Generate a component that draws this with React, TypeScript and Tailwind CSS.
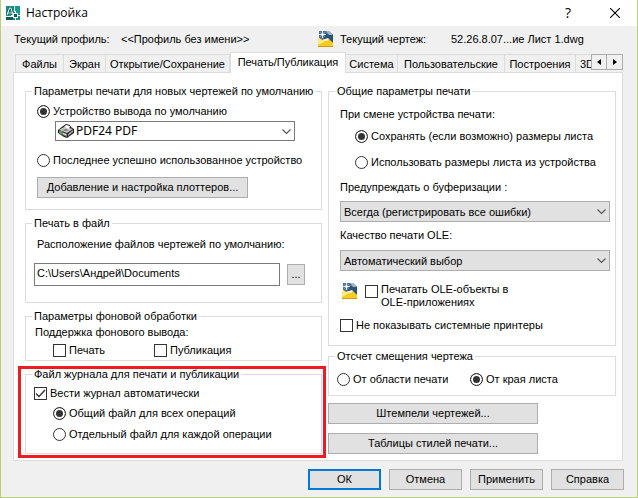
import { useState, type ReactNode } from "react";

const cx = (...parts: (string | undefined)[]) => parts.filter(Boolean).join(" ");

function AppIcon() {
  return (
    <svg width="14" height="14" viewBox="0 0 14 14" aria-hidden="true" className="shrink-0">
      <rect width="14" height="14" fill="#1a8f86" />
      <path d="M8 0h1v6H8z" fill="#d9f3ef" />
      <path d="M9 0h5v8H9z" fill="#17998c" />
      <path d="M0 10h7v4H0z" fill="#0b5f5a" />
      <path d="M1 9 3.500 2h1.500l2 7M2 7h4" fill="none" stroke="#0a4743" strokeWidth="2.200" />
      <path d="M1 9 3.500 2h1.500l2 7M2 7h4" fill="none" stroke="#d9f3ef" strokeWidth="1.1" />
      <path d="M0 10.500h7M9.500 5v3M9.500 12v2M12 9.500h2M5 9.500h3" stroke="#fff" strokeWidth="1" fill="none" />
      <rect x="7.500" y="7.500" width="4" height="4" fill="#0b5f5a" stroke="#fff" />
    </svg>
  );
}

function DrawingIcon() {
  return (
    <svg width="16" height="16" viewBox="0 0 16 16" aria-hidden="true" className="shrink-0">
      <path d="M1 0h10l4 4v11H1z" fill="#4d7195" />
      <path d="M7 3h8v8L6 8z" fill="#2c5076" />
      <path d="M8 0h3l4 4h-4z" fill="#9fb6c8" />
      <path d="M4.500 0v7M1 3.500h7" stroke="#dbe8f2" strokeWidth="1" />
      <path d="M2 1l5 5M7 1 2 6" stroke="#9db7cf" strokeWidth="0.6" />
      <rect x="3.500" y="2.500" width="2" height="2" fill="#fff" />
      <path d="M0 7h1l3 2 7-1 4 4v4H0z" fill="#f6cb22" />
      <path d="M0 7h1l3 2 5 0-9 5z" fill="#ffea85" />
      <path d="M4 9l6-2 1 1-2 2z" fill="#fff6c4" />
      <path d="M0 15h15v1H0z" fill="#d09a10" />
    </svg>
  );
}

function PrinterIcon() {
  return (
    <svg width="16" height="14" viewBox="0 0 16 14" aria-hidden="true">
      <path d="M0 6l5-4 3-2 4 1 1 2 3 2v4l-7 5-3-1-6-4z" fill="#222" />
      <path d="M1 6l5-3 9 2-6 4z" fill="#c9c9c9" />
      <path d="M6 3l2-2 4 1-1 3z" fill="#fff" />
      <path d="M1 7l8 3v3L1 9z" fill="#8b8b8b" />
      <path d="M10 10l5-4v2l-5 4z" fill="#a8a8a8" />
      <path d="M4 6l4-1 3 1-3 1z" fill="#777" />
      <path d="M2 7h2v2H2z" fill="#27c93b" />
      <path d="M5 9l3 1v1L5 10z" fill="#eee" />
    </svg>
  );
}

function Chevron() {
  return (
    <svg width="9" height="5" viewBox="0 0 9 5" aria-hidden="true" className="pointer-events-none absolute top-2 right-1">
      <path d="M.5.5l4 4 4-4" fill="none" stroke="#555" strokeWidth="1.1" />
    </svg>
  );
}

function Radio({ name, children, checked, className }: { name: string; children: string; checked?: boolean; className?: string }) {
  return (
    <label className={cx("flex h-4 items-center gap-[3px] whitespace-nowrap", className)}>
      <input
        type="radio"
        name={name}
        defaultChecked={checked}
        className="size-[13px] shrink-0 appearance-none rounded-full border border-[#333] bg-white checked:bg-[#333] checked:shadow-[inset_0_0_0_2px_white]"
      />
      {children}
    </label>
  );
}

function Check({ children, checked, className }: { children: ReactNode; checked?: boolean; className?: string }) {
  return (
    <label className={cx("flex gap-[3px]", className)}>
      <span className="grid h-4 place-items-center">
        <input
          type="checkbox"
          defaultChecked={checked}
          className="peer col-start-1 row-start-1 size-[13px] appearance-none border border-[#333] bg-white"
        />
        <svg width="11" height="9" viewBox="0 0 11 9" aria-hidden="true" className="pointer-events-none invisible col-start-1 row-start-1 peer-checked:visible">
          <path d="M1 4.500l3 3L10 1" fill="none" stroke="#333" strokeWidth="1.3" />
        </svg>
      </span>
      <span>{children}</span>
    </label>
  );
}

function Group({ title, children, className }: { title: string; children: ReactNode; className?: string }) {
  return (
    <fieldset className="min-w-0 border border-[#dcdcdc]">
      <legend className="ml-[6px] px-[2px] whitespace-nowrap">{title}</legend>
      <div className={className}>{children}</div>
    </fieldset>
  );
}

function Button({ children, className, label }: { children: ReactNode; className: string; label?: string }) {
  return (
    <button type="button" aria-label={label} className={cx("h-[21px] bg-[#e1e1e1] text-center leading-[17px] whitespace-nowrap", className)}>
      {children}
    </button>
  );
}

function Select({ id, options }: { id: string; options: string[] }) {
  return (
    <div className="relative">
      <select id={id} className="block h-[21px] w-full appearance-none border border-[#adadad] bg-[#e1e1e1] px-[3px]">
        {options.map((o) => (
          <option key={o}>{o}</option>
        ))}
      </select>
      <Chevron />
    </div>
  );
}

const tabs = [
  { title: "Файлы", width: "w-[49px]" },
  { title: "Экран", width: "w-[42px]" },
  { title: "Открытие/Сохранение", width: "w-[124px]" },
  { title: "Печать/Публикация", width: "w-[116px]" },
  { title: "Система", width: "w-[52px]" },
  { title: "Пользовательские", width: "w-[107px]" },
  { title: "Построения", width: "w-[71px]" },
  { title: "3D", width: "w-[30px]" },
];

function TabBar() {
  const [active, setActive] = useState(3);
  return (
    <div className="flex h-[21px] items-end pl-[2px]">
      <div role="tablist" className="flex h-full min-w-0 flex-1 items-end overflow-hidden">
        {tabs.map((tab, i) => (
          <button
            key={tab.title}
            type="button"
            role="tab"
            aria-selected={i === active}
            onClick={() => setActive(i)}
            className={cx(
              "shrink-0 border-t border-r border-[#dcdcdc] whitespace-nowrap",
              tab.width,
              i === tabs.length - 1 ? "pl-1 text-left" : "text-center",
              i === active ? "h-[21px] border-l bg-white pb-[3px]" : "h-[19px]",
              i === 0 ? "border-l" : undefined,
            )}
          >
            {tab.title}
          </button>
        ))}
      </div>
      <div className="flex self-start pt-[2px]">
        <button type="button" aria-label="Назад" className="grid h-4 w-4 place-items-center border border-[#adadad]">
          <svg width="4" height="6" viewBox="0 0 4 6"><path d="M4 0v6L0 3z" /></svg>
        </button>
        <button type="button" aria-label="Вперёд" className="grid h-4 w-4 place-items-center border border-l-0 border-[#adadad]">
          <svg width="4" height="6" viewBox="0 0 4 6"><path d="M0 0v6l4-3z" /></svg>
        </button>
      </div>
    </div>
  );
}

export default function App() {
  return (
    <main className="flex min-h-screen flex-col border border-t-0 border-[#b9d174] bg-[#f0f0f0] font-['Liberation_Sans',Arial,sans-serif] text-[11px] leading-4 text-black">
      <header className="flex h-[26px] items-center bg-white pr-4 pl-[5px]">
        <AppIcon />
        <h1 className="ml-[6px] flex-1 font-['Open_Sans',sans-serif] text-[12px]">Настройка</h1>
        <button type="button" aria-label="Справка" className="mr-[35px] w-3 font-['Open_Sans',sans-serif] text-[14px]">?</button>
        <button type="button" aria-label="Закрыть" className="p-px">
          <svg width="10" height="10" viewBox="0 0 10 10"><path d="M0 0l10 10M10 0L0 10" stroke="#000" strokeWidth="1.1" /></svg>
        </button>
      </header>

      <div className="grid h-[26px] grid-cols-[304fr_319fr] items-center pl-[13px]">
        <dl className="flex">
          <dt className="w-[107px]">Текущий профиль:</dt>
          <dd>&lt;&lt;Профиль без имени&gt;&gt;</dd>
        </dl>
        <div className="flex items-center gap-[6px]">
          <DrawingIcon />
          <dl className="flex">
            <dt className="w-[111px]">Текущий чертеж:</dt>
            <dd>52.26.8.07...ие Лист 1.dwg</dd>
          </dl>
        </div>
      </div>

      <div className="pr-[14px] pl-3">
        <TabBar />
        <div role="tabpanel" className="-mt-px grid grid-cols-[297fr_288fr] gap-x-[6px] border border-[#dcdcdc] bg-white pt-[10px] pr-[6px] pb-[6px] pl-[11px]">
          <div className="flex flex-col gap-[5px]">
            <Group title="Параметры печати для новых чертежей по умолчанию" className="px-[11px] pt-1 pb-[11px]">
              <Radio name="device" checked>Устройство вывода по умолчанию</Radio>
              <div className="relative mt-[2px] mr-[15px] ml-[18px]">
                <select aria-label="Устройство вывода" className="block h-5 w-full appearance-none border border-[#7a7a7a] bg-white pl-5 font-['Noto_Sans',sans-serif] text-[12px]">
                  <option>PDF24 PDF</option>
                </select>
                <span className="pointer-events-none absolute top-[3px] left-[3px]"><PrinterIcon /></span>
                <Chevron />
              </div>
              <Radio name="device" className="mt-[11px]">Последнее успешно использованное устройство</Radio>
              <Button className="mt-[9px] w-[211px] border border-[#adadad]">Добавление и настройка плоттеров...</Button>
            </Group>

            <Group title="Печать в файл" className="px-2 pt-[5px] pb-4">
              <label htmlFor="path" className="ml-[3px] block">Расположение файлов чертежей по умолчанию:</label>
              <div className="mt-[11px] mr-2 flex items-center gap-[7px]">
                <input id="path" defaultValue="C:\Users\Андрей\Documents" className="h-[23px] min-w-0 flex-1 border border-[#7a7a7a] bg-white px-[2px] pb-[3px]" />
                <Button label="Обзор" className="w-[18px] border border-[#adadad]">...</Button>
              </div>
            </Group>

            <Group title="Параметры фоновой обработки" className="px-[9px] pb-[2px]">
              <p>Поддержка фонового вывода:</p>
              <div className="mt-[2px] ml-[18px] flex">
                <Check className="w-[101px]">Печать</Check>
                <Check>Публикация</Check>
              </div>
            </Group>

            <div className="relative">
              <Group title="Файл журнала для печати и публикации" className="px-2 pt-[3px] pb-[11px]">
                <Check checked>Вести журнал автоматически</Check>
                <Radio name="log" checked className="mt-1 ml-[19px]">Общий файл для всех операций</Radio>
                <Radio name="log" className="mt-[5px] ml-[19px]">Отдельный файл для каждой операции</Radio>
              </Group>
              <div className="pointer-events-none absolute top-0 -right-1 -bottom-1 -left-[7px] border-3 border-[#ed1c24]" />
            </div>
          </div>

          <div className="flex flex-col">
            <Group title="Общие параметры печати" className="pt-[7px] pr-[5px] pb-[12px] pl-[11px]">
              <p>При смене устройства печати:</p>
              <Radio name="change" checked className="mt-[6px] ml-[15px]">Сохранять (если возможно) размеры листа</Radio>
              <Radio name="change" className="mt-[10px] ml-[15px]">Использовать размеры листа из устройства</Radio>
              <label htmlFor="spool" className="mt-[9px] mb-[6px] block">Предупреждать о буферизации :</label>
              <Select id="spool" options={["Всегда (регистрировать все ошибки)"]} />
              <label htmlFor="ole" className="mt-[5px] mb-[7px] block">Качество печати OLE:</label>
              <Select id="ole" options={["Автоматический выбор"]} />
              <div className="mt-3 ml-[2px] flex gap-[7px]">
                <DrawingIcon />
                <Check className="leading-[13px]">Печатать OLE-объекты в<br />OLE-приложениях</Check>
              </div>
              <Check className="mt-2">Не показывать системные принтеры</Check>
            </Group>

            <div className="mt-[2px]">
              <Group title="Отсчет смещения чертежа" className="px-2 pt-[7px] pb-2">
                <div className="flex">
                  <Radio name="offset" className="w-[133px]">От области печати</Radio>
                  <Radio name="offset" checked>От края листа</Radio>
                </div>
              </Group>
            </div>

            <div className="mt-[7px] flex flex-col gap-[9px]">
              <Button className="w-[210px] border border-[#adadad]">Штемпели чертежей...</Button>
              <Button className="w-[210px] border border-[#adadad]">Таблицы стилей печати...</Button>
            </div>
          </div>
        </div>
      </div>

      <footer className="mt-2 flex justify-end gap-2 pr-[13px]">
        <Button className="w-[73px] border-2 border-[#0078d7]">ОК</Button>
        <Button className="w-[73px] border border-[#adadad]">Отмена</Button>
        <Button className="w-[73px] border border-[#adadad]">Применить</Button>
        <Button className="w-[73px] border border-[#adadad]">Справка</Button>
      </footer>
    </main>
  );
}
